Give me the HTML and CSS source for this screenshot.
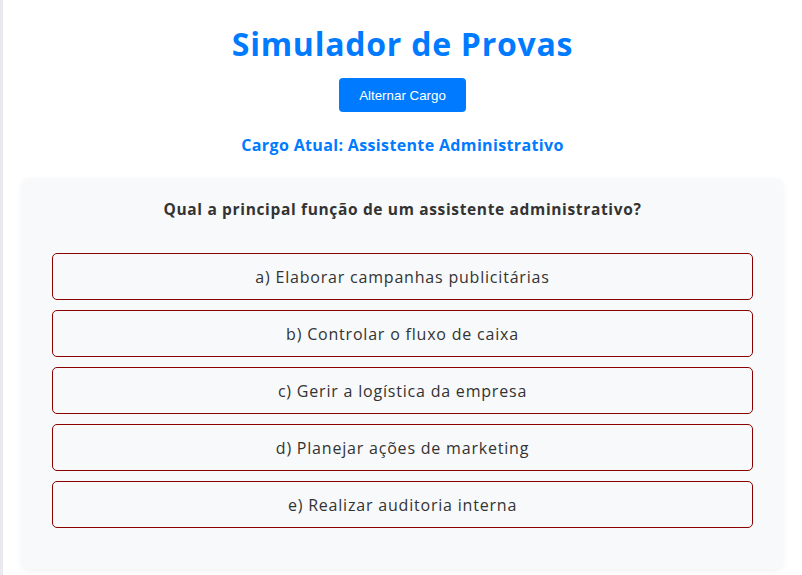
FILE: index.html
```html
<!DOCTYPE html>
<html lang="pt-BR">
<head>
<meta charset="utf-8">
<title>Simulador de Provas</title>
<link rel="stylesheet" href="styles.css">
</head>
<body>
<div class="page">
  <div class="strip"></div>
  <main class="main">
    <h1 class="title">Simulador de Provas</h1>
    <button class="toggle" type="button">Alternar Cargo</button>
    <h3 class="cargo">Cargo Atual: Assistente Administrativo</h3>
    <section class="card">
      <h2 class="question">Qual a principal função de um assistente administrativo?</h2>
      <div class="options">
        <div class="option">a) Elaborar campanhas publicitárias</div>
        <div class="option">b) Controlar o fluxo de caixa</div>
        <div class="option">c) Gerir a logística da empresa</div>
        <div class="option">d) Planejar ações de marketing</div>
        <div class="option">e) Realizar auditoria interna</div>
      </div>
    </section>
  </main>
</div>
</body>
</html>
```

FILE: styles.css
```css
html, body {
  margin: 0;
  padding: 0;
  background: #ffffff;
}

body {
  font-family: "Open Sans", "DejaVu Sans", sans-serif;
  color: #333333;
}

.page {
  display: flex;
  min-height: 575px;
}

.strip {
  width: 3px;
  flex: none;
  background: #e9e9ef;
}

.main {
  flex: 1;
  padding: 20px 19px 0 19px;
  text-align: center;
}

.title {
  margin: 0;
  font-size: 32px;
  line-height: 48px;
  font-weight: 700;
  letter-spacing: 0.75px;
  color: #007bff;
}

.toggle {
  margin-top: 10px;
  height: 34px;
  padding: 0 20px;
  border: none;
  border-radius: 4px;
  background: #007bff;
  color: #ffffff;
  font-family: "Liberation Sans", Arial, sans-serif;
  font-size: 13.33px;
  cursor: pointer;
}

.cargo {
  margin: 21px 0 21px 0;
  font-size: 16px;
  line-height: 24px;
  font-weight: 700;
  letter-spacing: 0.35px;
  color: #007bff;
}

.card {
  background: #f8f9fa;
  border-radius: 8px;
  box-shadow: 0 2px 6px rgba(0, 0, 0, 0.06);
  padding: 20px 30px 41px 30px;
}

.question {
  margin: 0 0 33px 0;
  font-size: 15.5px;
  line-height: 22px;
  font-weight: 700;
  letter-spacing: 0.65px;
  color: #333333;
}

.options {
  display: flex;
  flex-direction: column;
  gap: 10px;
}

.option {
  height: 45px;
  border: 1px solid #8b0000;
  border-radius: 5px;
  display: flex;
  align-items: center;
  justify-content: center;
  font-size: 16px;
  letter-spacing: 0.8px;
  color: #333333;
}
```
